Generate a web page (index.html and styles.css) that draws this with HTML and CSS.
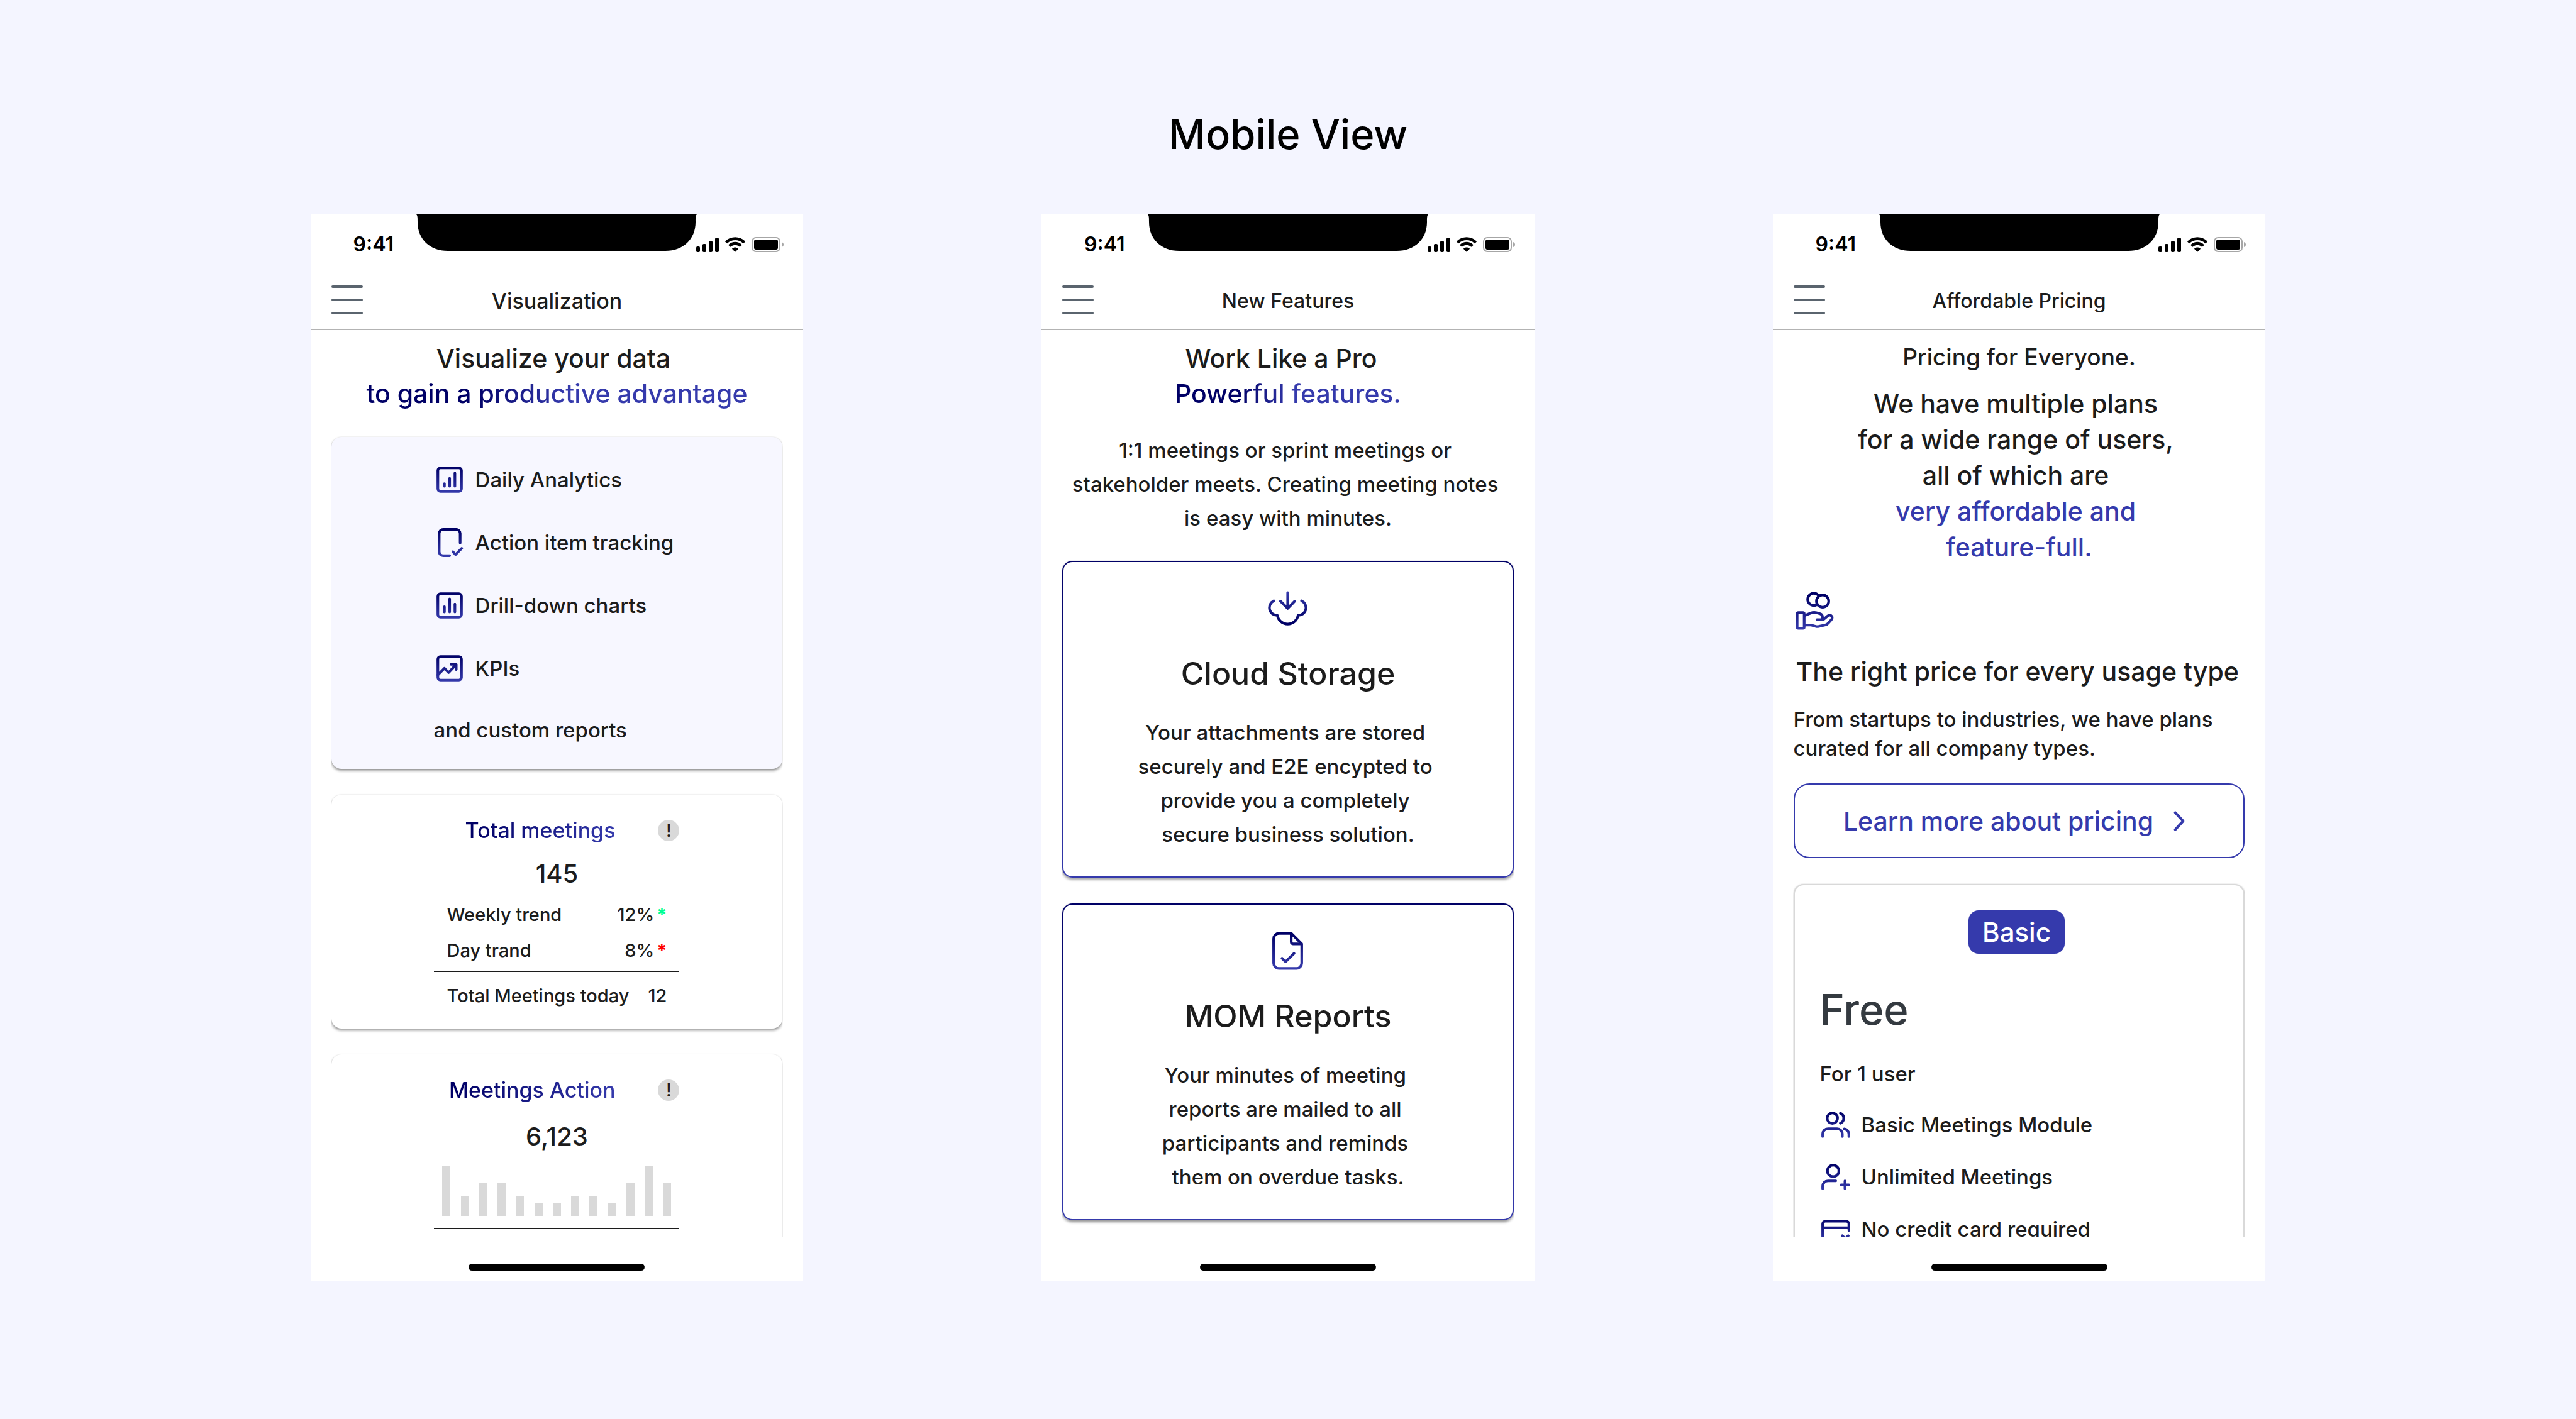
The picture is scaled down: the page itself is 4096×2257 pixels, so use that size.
FILE: index.html
```html
<!DOCTYPE html>
<html lang="en">
<head>
<meta charset="utf-8">
<meta name="viewport" content="width=device-width, initial-scale=1">
<title>Mobile View</title>
<link rel="stylesheet" href="styles.css">
</head>
<body>
<svg class="defs" width="0" height="0" aria-hidden="true">
  <defs>
    <linearGradient id="ink" gradientUnits="userSpaceOnUse" x1="0" y1="2" x2="0" y2="22">
      <stop offset="0" stop-color="#000066"/><stop offset="1" stop-color="#353aac"/>
    </linearGradient>
    <linearGradient id="ink-up" gradientUnits="userSpaceOnUse" x1="0" y1="324" x2="0" y2="90">
      <stop offset="0.1" stop-color="#000066"/><stop offset="1" stop-color="#353aac"/>
    </linearGradient>
    <linearGradient id="ink-hand" gradientUnits="userSpaceOnUse" x1="0" y1="66" x2="0" y2="324">
      <stop offset="0.1" stop-color="#000066"/><stop offset="1" stop-color="#353aac"/>
    </linearGradient>
    <symbol id="i-notch" viewBox="0 0 446 58">
      <path d="M0 0H446C444 2 444 5 444 12C444 40 424 58 396 58H50C22 58 2 40 2 12C2 5 2 2 0 0Z"/>
    </symbol>
    <symbol id="i-signal" viewBox="0 0 36 24">
      <rect x="0" y="15" width="6" height="9" rx="2"/><rect x="10" y="11" width="6" height="13" rx="2"/><rect x="20" y="6" width="6" height="18" rx="2"/><rect x="30" y="1" width="6" height="23" rx="2"/>
    </symbol>
    <symbol id="i-wifi" viewBox="0.4 0 16.2 12">
      <path d="M8.5 2.5c2.4 0 4.6.9 6.3 2.5.1.1.3.1.4 0l1.2-1.2c.2-.2.2-.4 0-.6-4.4-4.2-11.4-4.2-15.8 0-.2.2-.2.4 0 .6L1.8 5c.1.1.3.1.4 0 1.7-1.6 4-2.5 6.3-2.5zM8.5 6.4c1.3 0 2.6.5 3.5 1.4.1.1.3.1.5 0l1.2-1.2c.2-.2.2-.4 0-.6-2.9-2.8-7.5-2.8-10.4 0-.2.2-.2.4 0 .6l1.2 1.2c.1.1.3.1.4 0 1-.9 2.3-1.4 3.6-1.4zM10.8 9.1c.2.2.2.4 0 .6l-2.1 2.1c-.1.1-.3.1-.4 0L6.2 9.7c-.2-.2-.2-.4 0-.6 1.3-1.1 3.3-1.1 4.6 0z"/>
    </symbol>
    <symbol id="i-battery" viewBox="0 0 51 24">
      <rect x="1" y="1" width="44" height="22" rx="6" fill="none" stroke="#a6a6a6" stroke-width="2"/>
      <rect x="4" y="4" width="38" height="16" rx="3"/>
      <path d="M48 8c2 1 3 2 3 4s-1 3-3 4z" fill="#a6a6a6"/>
    </symbol>
    <symbol id="i-menu" viewBox="0 0 50 50">
      <path d="M2 2H48M2 23H48M2 44H48" fill="none" stroke="#5a646e" stroke-width="4" stroke-linecap="round"/>
    </symbol>
  </defs>
</svg>

<main class="page">
  <h1 class="page-title">Mobile View</h1>
  <div class="phones">

    <section class="phone">
      <div class="status">
        <span class="time">9:41</span>
        <svg class="notch" aria-hidden="true"><use href="#i-notch"/></svg>
        <span class="status-icons">
          <svg class="signal" aria-hidden="true"><use href="#i-signal"/></svg>
          <svg class="wifi" aria-hidden="true"><use href="#i-wifi"/></svg>
          <svg class="battery" aria-hidden="true"><use href="#i-battery"/></svg>
        </span>
      </div>
      <header class="nav">
        <button class="menu" type="button" aria-label="Menu"><svg class="icon"><use href="#i-menu"/></svg></button>
        <h2 class="nav-title nav-title-large">Visualization</h2>
      </header>
      <div class="content">
        <p class="headline">Visualize your data&nbsp;<br><span class="grad grad-split">to gain a productive advantage</span></p>
        <ul class="card card-tint checklist">
          <li><svg class="icon line" viewBox="0 0 24 24" aria-hidden="true"><rect x="3" y="3" width="18" height="18" rx="2"/><path d="M8 15v2M12 11v6M16 7v10"/></svg>Daily Analytics</li>
          <li><svg class="icon line" viewBox="0 0 24 24" aria-hidden="true"><path d="M20 12.3V5a3 3 0 0 0-3-3H7a3 3 0 0 0-3 3v14a3 3 0 0 0 3 3h5M14.5 19l2 2.2 4.7-4.8"/></svg>Action item tracking</li>
          <li><svg class="icon line" viewBox="0 0 24 24" aria-hidden="true"><rect x="3" y="3" width="18" height="18" rx="2"/><path d="M8 13v4M12 7v10M16 11v6"/></svg>Drill-down charts</li>
          <li><svg class="icon line" viewBox="0 0 24 24" aria-hidden="true"><rect x="3" y="3" width="18" height="18" rx="2"/><path d="M3 17l5-5 3.2 3.3L17 9M13 9h4v4"/></svg>KPIs</li>
          <li class="plain">and custom reports</li>
        </ul>
        <article class="card stat">
          <div class="stat-body">
            <div class="stat-head"><h3 class="grad">Total meetings</h3><span class="info">!</span></div>
            <p class="figure">145</p>
            <table class="trends">
              <tbody>
                <tr><th scope="row">Weekly trend</th><td>12%<span class="mark up">*</span></td></tr>
                <tr><th scope="row">Day trand</th><td>8%<span class="mark down">*</span></td></tr>
              </tbody>
              <tfoot><tr><th scope="row">Total Meetings today</th><td>12</td></tr></tfoot>
            </table>
          </div>
        </article>
        <article class="card stat">
          <div class="stat-body">
            <div class="stat-head"><h3 class="grad">Meetings Action</h3><span class="info">!</span></div>
            <p class="figure figure-chart">6,123</p>
            <div class="bars">
              <i style="height:100%"></i><i style="height:39%"></i><i style="height:66%"></i><i style="height:66%"></i><i style="height:39%"></i><i style="height:27%"></i><i style="height:27%"></i><i style="height:39%"></i><i style="height:39%"></i><i style="height:27%"></i><i style="height:66%"></i><i style="height:100%"></i><i style="height:66%"></i>
            </div>
          </div>
        </article>
      </div>
      <div class="home"></div>
    </section>

    <section class="phone">
      <div class="status">
        <span class="time">9:41</span>
        <svg class="notch" aria-hidden="true"><use href="#i-notch"/></svg>
        <span class="status-icons">
          <svg class="signal" aria-hidden="true"><use href="#i-signal"/></svg>
          <svg class="wifi" aria-hidden="true"><use href="#i-wifi"/></svg>
          <svg class="battery" aria-hidden="true"><use href="#i-battery"/></svg>
        </span>
      </div>
      <header class="nav">
        <button class="menu" type="button" aria-label="Menu"><svg class="icon"><use href="#i-menu"/></svg></button>
        <h2 class="nav-title">New Features</h2>
      </header>
      <div class="content">
        <div class="intro">
          <p class="headline">Work Like a Pro&nbsp;&nbsp;<br><span class="grad grad-split">Powerful features.</span></p>
          <p class="copy">1:1 meetings or sprint meetings or&nbsp;<br>stakeholder meets. Creating meeting notes&nbsp;<br>is easy with minutes.</p>
        </div>
        <article class="card feature">
          <svg class="feature-icon cloud" viewBox="92 62 288 288" aria-hidden="true"><path d="M236 99V205M187 158L236 207L284 158M141 155A52 52 0 0 0 165 254A72 72 0 0 0 307 254A52 52 0 0 0 331 155"/></svg>
          <h3>Cloud Storage</h3>
          <p class="copy">Your attachments are stored&nbsp;<br>securely and E2E encypted to&nbsp;<br>provide you a completely&nbsp;<br>secure business solution.</p>
        </article>
        <article class="card feature">
          <svg class="feature-icon line thin" viewBox="0 0 24 24" aria-hidden="true"><path d="M14 2H7a3 3 0 0 0-3 3v14a3 3 0 0 0 3 3h10a3 3 0 0 0 3-3V8zM14 2v5a1 1 0 0 0 1 1h5M8.8 16.2l2 2 4.8-4.8"/></svg>
          <h3>MOM Reports</h3>
          <p class="copy">Your minutes of meeting&nbsp;<br>reports are mailed to all&nbsp;<br>participants and reminds&nbsp;<br>them on overdue tasks.</p>
        </article>
      </div>
      <div class="home"></div>
    </section>

    <section class="phone">
      <div class="status">
        <span class="time">9:41</span>
        <svg class="notch" aria-hidden="true"><use href="#i-notch"/></svg>
        <span class="status-icons">
          <svg class="signal" aria-hidden="true"><use href="#i-signal"/></svg>
          <svg class="wifi" aria-hidden="true"><use href="#i-wifi"/></svg>
          <svg class="battery" aria-hidden="true"><use href="#i-battery"/></svg>
        </span>
      </div>
      <header class="nav">
        <button class="menu" type="button" aria-label="Menu"><svg class="icon"><use href="#i-menu"/></svg></button>
        <h2 class="nav-title">Affordable Pricing</h2>
      </header>
      <div class="content">
        <div class="pricing">
          <p class="kicker">Pricing for Everyone.</p>
          <p class="headline">We have multiple plans&nbsp;<br>for a wide range of users,&nbsp;<br>all of which are&nbsp;<br><span class="accent">very affordable and&nbsp;<br>feature-full.</span></p>
          <svg class="hand" viewBox="75 51 288 288" aria-hidden="true"><circle cx="213" cy="117" r="42"/><circle cx="273" cy="129" r="42" class="coin-front"/><rect x="99" y="207" width="48" height="108" rx="8"/><path d="M150 228L188 212Q212 203 230 208L256 215Q272 220 272 236Q272 250 262 256M234 256H270Q276 256 281 252L308 230Q320 221 330 227Q343 236 336 251Q334 256 312 279Q303 289 292 292L246 302Q235 304 225 301L195 293Q190 292 184 292H150"/></svg>
          <h3 class="price-title">The right price for every usage type</h3>
          <p class="price-copy">From startups to industries, we have plans<br>curated for all company types.</p>
          <button class="learn" type="button">Learn more about pricing<svg class="icon" viewBox="0 0 24 24" aria-hidden="true"><path d="M9 5.5l6 6.5-6 6.5"/></svg></button>
        </div>
        <article class="card plan">
          <span class="badge">Basic</span>
          <p class="price">Free</p>
          <p class="seats">For 1 user</p>
          <ul class="perks">
            <li><svg class="icon line" viewBox="0 0 24 24" aria-hidden="true"><circle cx="9.4" cy="7" r="4"/><path d="M15.5 3.2a4.1 4.1 0 0 1 0 7.6M2 21v-2a4 4 0 0 1 4-4h7a4 4 0 0 1 4 4v2M18.5 15.2a4 4 0 0 1 3.5 4V21"/></svg>Basic Meetings Module</li>
            <li><svg class="icon line" viewBox="0 0 24 24" aria-hidden="true"><circle cx="10" cy="7.4" r="4.4"/><path d="M2 21v-2a4 4 0 0 1 4-4h6M16 18h6M19 15v6"/></svg>Unlimited Meetings</li>
            <li><svg class="icon line" viewBox="0 0 24 24" aria-hidden="true"><path d="M22 13V8a2 2 0 0 0-2-2H4a2 2 0 0 0-2 2v11a2 2 0 0 0 2 2h9M2 11h20M17 17l4 4M21.5 17l-4 4"/></svg>No credit card required</li>
          </ul>
        </article>
      </div>
      <div class="home"></div>
    </section>

  </div>
</main>
</body>
</html>
```
FILE: styles.css
```css
:root {
  --navy: #000066;
  --indigo: #353aac;
  --text: #1c1c1c;
  --grey: #d9d9d9;
  --gap: 41px;
}

* { box-sizing: border-box; }

body {
  margin: 0;
  background: #f4f5ff;
  color: var(--text);
  font: 500 33px/46px Inter, "Liberation Sans", sans-serif;
}

h1, h2, h3, p, ul { margin: 0; padding: 0; font-weight: 500; }
ul { list-style: none; }
button { font: inherit; cursor: pointer; }
svg { display: block; flex: none; }
.defs { position: absolute; }

.page {
  min-height: 100vh;
  padding: 174px 12.05% 100px;
}

.page-title {
  color: #000;
  font-size: 65px;
  line-height: 80px;
  text-align: center;
}

.phones {
  display: grid;
  grid-template-columns: repeat(3, minmax(0, 1fr));
  column-gap: 12.18%;
  margin-top: 87px;
}

.phone {
  position: relative;
  display: flex;
  flex-direction: column;
  aspect-ratio: 375 / 812;
  min-height: 0;
  overflow: hidden;
  background: #fff;
}

/* status bar */
.status {
  display: flex;
  flex: none;
  align-items: center;
  justify-content: space-between;
  height: 92px;
  padding: 3px 31px 0 68px;
  color: #000;
}
.time { font-size: 32px; font-weight: 600; }
.notch {
  position: absolute;
  top: 0;
  left: 50%;
  width: 446px;
  height: 58px;
  transform: translateX(-50%);
}
.status-icons { display: flex; align-items: center; gap: 10px; }
.signal { width: 36px; height: 24px; }
.wifi { width: 32px; height: 24px; }
.battery { width: 51px; height: 24px; }

/* title bar */
.nav {
  display: grid;
  flex: none;
  grid-template-columns: 1fr auto 1fr;
  align-items: center;
  height: 92px;
  padding: 0 33px;
  border-bottom: 1px solid #b3b3b3;
}
.menu { width: 50px; padding: 0; border: 0; background: none; }
.nav-title { font-size: 32px; }
.nav-title-large { font-size: 34px; }

.content {
  display: flex;
  flex: 1;
  flex-direction: column;
  gap: var(--gap);
  min-height: 0;
  padding: 17px 33px 0;
  overflow: hidden;
}
.content > * { flex: none; }

.home {
  flex: none;
  width: 280px;
  height: 11px;
  margin: 43px auto 17px;
  border-radius: 6px;
  background: #000;
}

.icon { width: 50px; height: 50px; }
.line {
  fill: none;
  stroke: url(#ink);
  stroke-width: 2;
  stroke-linecap: round;
  stroke-linejoin: round;
}
.thin { stroke-width: 1.5; }

/* text */
.headline { font-size: 41px; line-height: 56px; text-align: center; }
.copy { line-height: 54px; text-align: center; }
.grad {
  display: inline-block;
  background: linear-gradient(90deg, var(--navy) 5%, var(--indigo));
  background-clip: text;
  -webkit-background-clip: text;
  color: transparent;
}
.grad-split { background-image: linear-gradient(90deg, var(--navy) 28%, var(--indigo) 52%); }
.accent { color: var(--indigo); }
.intro { display: grid; gap: 35px; }

/* cards */
.card {
  border-radius: 16px;
  background: #fff;
  box-shadow: 0 3px 4px rgba(0, 0, 0, .4), 0 0 2px rgba(0, 0, 0, .12);
  clip-path: inset(-4px 0 -12px);
}
.card-tint { background: #f7f7ff; }

.checklist {
  display: grid;
  gap: 50px;
  padding: 43px 0 39px 163px;
}
.checklist li { display: flex; align-items: center; gap: 16px; height: 50px; }
.checklist .plain { height: 46px; }

.stat { padding: 35px 0 15px; }
.stat:last-child { padding-bottom: 80px; }
.stat-body { width: 390px; margin: 0 auto; }
.stat-head {
  display: flex;
  align-items: center;
  justify-content: flex-end;
  gap: 68px;
  height: 44px;
}
.stat-head h3 { font-size: 34px; line-height: 44px; }
.info {
  width: 34px;
  height: 34px;
  border-radius: 50%;
  background: var(--grey);
  font-size: 29px;
  line-height: 34px;
  text-align: center;
}
.figure {
  margin-top: 22px;
  font-size: 40px;
  line-height: 50px;
  text-align: center;
}

.trends, .trends tbody, .trends tfoot { display: block; }
.trends { margin-top: 11px; font-size: 29px; line-height: 36px; }
.trends tr {
  display: flex;
  align-items: center;
  justify-content: space-between;
  height: 57px;
  padding: 0 20px;
}
.trends th, .trends td { padding: 0; font-weight: 500; white-space: nowrap; }
.trends tbody { padding-bottom: 4px; }
.trends tfoot tr { height: 77px; border-top: 2px solid var(--text); }
.mark { margin-left: 4px; font-weight: 700; }
.up { color: #00ff94; }
.down { color: #f00; }

.figure-chart { margin-top: 27px; }
.bars {
  display: flex;
  align-items: flex-end;
  justify-content: space-between;
  box-sizing: content-box;
  height: 79px;
  margin-top: 22px;
  padding: 0 13px 19px;
  border-bottom: 2px solid var(--text);
}
.bars i { width: 13px; background: var(--grey); }

.feature {
  display: flex;
  flex-direction: column;
  align-items: center;
  padding: 40px 0 39px;
  border: 2px solid transparent;
  background:
    linear-gradient(#fff, #fff) padding-box,
    linear-gradient(var(--navy), var(--indigo)) border-box;
}
.feature-icon { width: 67px; height: 67px; }
.feature h3 { margin-top: 37px; font-size: 50px; line-height: 66px; }
.feature .copy { margin-top: 34px; padding-bottom: 1px; }
.cloud {
  fill: none;
  stroke: url(#ink-up);
  stroke-width: 18;
  stroke-linecap: round;
  stroke-linejoin: round;
}

/* pricing */
.pricing { display: flex; flex-direction: column; }
.kicker { font-size: 37px; line-height: 52px; text-align: center; }
.pricing .headline { margin-top: 20px; line-height: 57px; }
.hand {
  width: 67px;
  height: 67px;
  margin-top: 39px;
  fill: none;
  stroke: url(#ink-hand);
  stroke-width: 18;
  stroke-linecap: round;
  stroke-linejoin: round;
}
.coin-front { fill: #fff; }
.price-title { margin: 35px 0 25px 4px; font-size: 41px; line-height: 56px; white-space: nowrap; }
.price-copy { white-space: nowrap; }
.learn {
  display: flex;
  align-items: center;
  justify-content: center;
  gap: 16px;
  height: 119px;
  margin-top: 33px;
  border: 2px solid var(--indigo);
  border-radius: 25px;
  background: #fff;
  color: var(--indigo);
  font-size: 41px;
}
.learn .icon {
  fill: none;
  stroke: var(--indigo);
  stroke-width: 2;
  stroke-linecap: round;
  stroke-linejoin: round;
}

.plan {
  display: flex;
  flex-direction: column;
  padding: 40px 40px 60px;
  border: 2px solid var(--grey);
}
.badge {
  align-self: center;
  margin-right: 8px;
  padding: 0 22px;
  border-radius: 16px;
  background: var(--indigo);
  color: #fff;
  font-size: 42px;
  line-height: 69px;
}
.price { margin-top: 49px; color: #343a40; font-size: 67px; line-height: 80px; }
.seats { margin-top: 39px; }
.perks { display: grid; gap: 33px; margin-top: 33px; }
.perks li { display: flex; align-items: center; gap: 16px; height: 50px; }
```
